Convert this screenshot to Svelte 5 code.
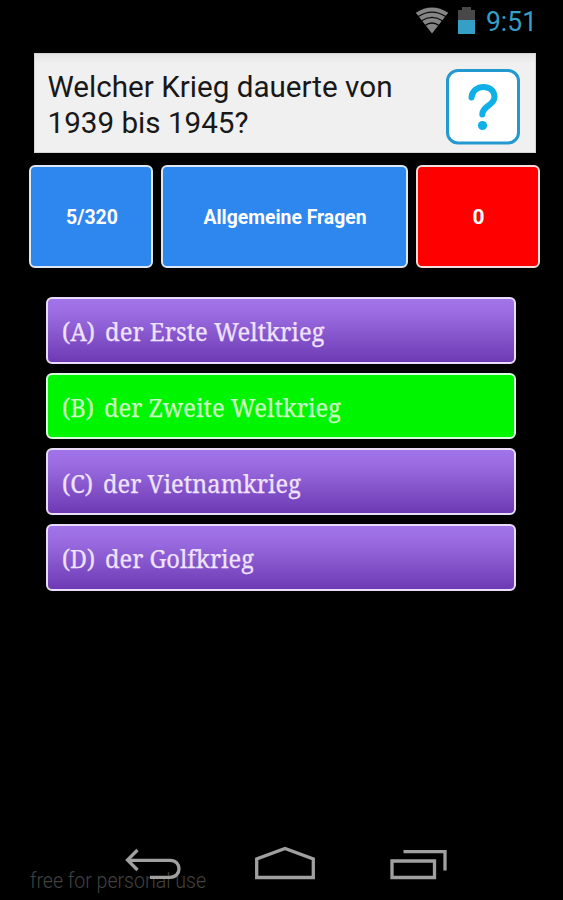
<script>
  const answers = [
    { key: '(A)', text: 'der Erste Weltkrieg', gap: 10, width: 219.5 },
    { key: '(B)', text: 'der Zweite Weltkrieg', gap: 10, width: 237, correct: true },
    { key: '(C)', text: 'der Vietnamkrieg', gap: 10, width: 198 },
    { key: '(D)', text: 'der Golfkrieg', gap: 10, width: 149 }
  ];
  const keyWidths = { '(A)': 33, '(B)': 32, '(C)': 31, '(D)': 33 };
</script>

<div class="screen">
  <header>
    <svg class="wifi" width="34" height="27" viewBox="0 0 34 27">
      <path d="M0.8 5.8Q17 -4.8 33.2 5.8L17 26.5Z" fill="#858585" />
      <g fill="none" stroke="#0b0b0b" stroke-width="1.3">
        <path d="M3 9.6Q17 0.5 31 9.6" />
        <path d="M6.2 14Q17 6.8 27.8 14" />
        <path d="M10 18.5Q17 13.5 24 18.5" />
      </g>
    </svg>
    <svg class="battery" width="17" height="28" viewBox="0 0 17 28">
      <path d="M0 3H4V0H13V3H17V13H0Z" fill="#484848" />
      <path d="M0 13H17V27H0Z" fill="#359fc5" />
    </svg>
    <svg class="clock" width="60" height="36"><text x="2" y="26" textLength="51" lengthAdjust="spacingAndGlyphs">9:51</text></svg>
  </header>

  <section class="question">
    <svg class="prompt" width="360" height="84">
      <text x="0.5" y="32.5" textLength="345" lengthAdjust="spacingAndGlyphs">Welcher Krieg dauerte von</text>
      <text x="0.5" y="68.5" textLength="201" lengthAdjust="spacingAndGlyphs">1939 bis 1945?</text>
    </svg>
    <svg class="help" width="76" height="78" viewBox="0 0 76 78">
      <rect x="2.5" y="2.5" width="71" height="72.5" rx="10.5" fill="#fff" stroke="#2299cf" stroke-width="3" />
      <path d="M26.5 29.5C27.5 15.5 49.5 15.5 49.5 29C49.5 37.5 37.3 37.5 37.3 46.5" fill="none" stroke="#0fb0e8" stroke-width="6" stroke-linecap="round" />
      <circle cx="37.5" cy="57.5" r="4.6" fill="#0fb0e8" />
    </svg>
  </section>

  <section class="stats">
    <div class="stat"><svg width="60" height="30"><text x="5" y="22" textLength="52" lengthAdjust="spacingAndGlyphs">5/320</text></svg></div>
    <div class="stat wide"><svg width="180" height="30"><text x="8.5" y="22" textLength="163" lengthAdjust="spacingAndGlyphs">Allgemeine Fragen</text></svg></div>
    <div class="stat red"><svg width="30" height="30"><text x="9.5" y="22" textLength="12" lengthAdjust="spacingAndGlyphs">0</text></svg></div>
  </section>

  <section class="answers">
    {#each answers as a}
      <div class="answer" class:correct={a.correct}>
        <svg width="400" height="44">
          <text x="0" y="32.7" textLength={keyWidths[a.key]} lengthAdjust="spacingAndGlyphs">{a.key}</text>
          <text x={keyWidths[a.key] + a.gap} y="32.7" textLength={a.width} lengthAdjust="spacingAndGlyphs">{a.text}</text>
        </svg>
      </div>
    {/each}
  </section>

  <footer>
    <svg width="563" height="70" viewBox="0 830 563 70">
      <text class="mark" x="30" y="888" textLength="176" lengthAdjust="spacingAndGlyphs">free for personal use</text>
      <g fill="none" stroke="#a0a0a0" stroke-width="3.3">
        <path d="M137.5 850L127.5 860L137.5 870M128 860.3H170C182 860.3 182 877.3 170 877.3H150" />
        <path d="M256.7 877.5V859L285 848.5L313.3 859V877.5Z" />
        <path d="M392 861H434.5V877.5H392ZM403.5 851.7H445V870.5" />
      </g>
    </svg>
  </footer>
</div>

<style>
  :global(body) { margin: 0; background: #000; }
  .screen {
    width: 563px;
    height: 900px;
    background: #000;
    display: flex;
    flex-direction: column;
    overflow: hidden;
    font-family: Roboto, sans-serif;
  }
  svg { display: block; flex: none; }
  header {
    height: 46px;
    flex: none;
    display: flex;
    padding: 7px 0 0 415px;
    box-sizing: border-box;
  }
  .battery { margin-left: 9px; }
  .clock { margin: -2px 0 0 9px; }
  .clock text { font-size: 27px; fill: #359fc5; }
  .question {
    height: 100px;
    margin: 7px 27px 0 34px;
    padding-left: 12px;
    box-sizing: border-box;
    border: 1px solid #d4d4d4;
    background: linear-gradient(#e5e5e5, #f0f0f0 10px);
    display: flex;
    align-items: flex-start;
    flex: none;
    gap: 38px;
  }
  .prompt { margin-top: 10px; }
  .prompt text { font-size: 29px; fill: #181818; }
  .help { margin-top: 14px; }
  .stats {
    display: flex;
    gap: 8px;
    margin: 12px 23px 0 29px;
    height: 103px;
    flex: none;
  }
  .stat {
    width: 124px;
    box-sizing: border-box;
    border: 2px solid #dfe7f3;
    border-radius: 6px;
    background: #2e86ef;
    display: flex;
    align-items: center;
    justify-content: center;
  }
  .wide { width: 247px; }
  .red { background: #f00; border-color: #f4dddd; }
  .stat text { font-size: 20px; font-weight: 700; fill: #fff; }
  .answers {
    display: flex;
    flex-direction: column;
    gap: 9px;
    margin: 29px 47px 0 46px;
  }
  .answer {
    height: 66.7px;
    box-sizing: border-box;
    border: 2px solid #e8dcf6;
    border-radius: 6px;
    padding-left: 14px;
    background: linear-gradient(#a274ea, #9a6be0 25%, #6d3ab3);
    display: flex;
    align-items: center;
  }
  .correct { background: #00f500; border-color: #d9fbe0; }
  .answer text {
    font-family: "Droid Serif", "Noto Serif", "DejaVu Serif Condensed", "DejaVu Serif", serif;
    font-size: 25px;
    fill: #f0e3ff;
    stroke: #f0e3ff;
    stroke-width: 0.25px;
  }
  .correct text { fill: #c9ffc2; stroke: #c9ffc2; }
  footer { margin-top: auto; height: 70px; }
  .mark { font-size: 22px; font-weight: 300; fill: #424242; }
</style>
